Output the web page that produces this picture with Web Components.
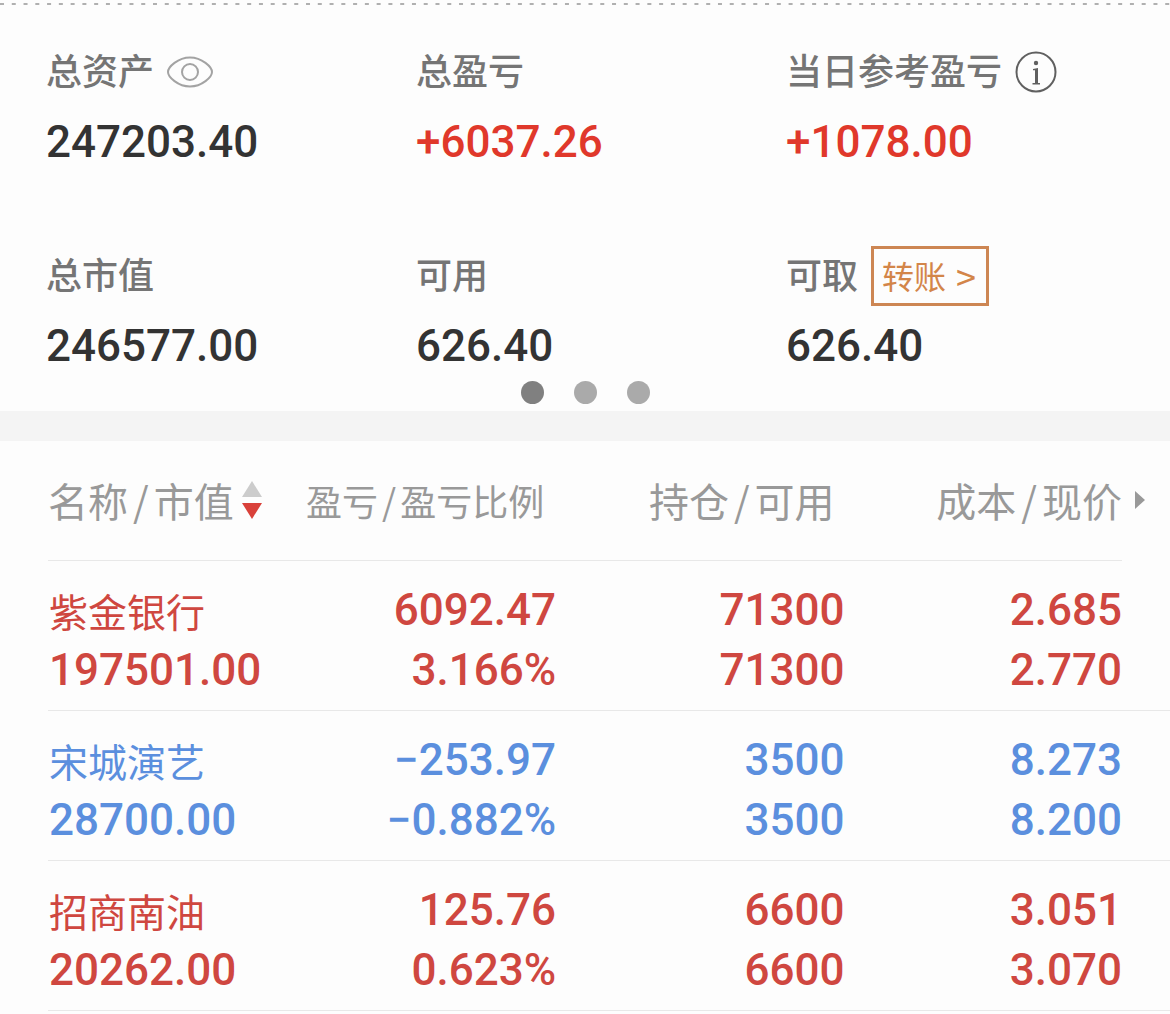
<!DOCTYPE html>
<html lang="zh-CN">
<head>
<meta charset="UTF-8">
<meta name="viewport" content="width=device-width, initial-scale=1">
<title>持仓</title>
<style>
    body {
        margin: 0;
        background: #fdfdfd;
        font-family: "Noto Sans CJK SC", sans-serif;
        --num-font: Roboto, "Noto Sans CJK SC", sans-serif;
        --rise: #e0382b;
    }
</style>
</head>
<body>
<account-summary>
    <asset-item label="总资产" value="247203.40">
        <icon-button slot="extra" icon="eye" label="隐藏金额"></icon-button>
    </asset-item>
    <asset-item label="总盈亏" value="+6037.26" trend="rise"></asset-item>
    <asset-item label="当日参考盈亏" value="+1078.00" trend="rise">
        <icon-button slot="extra" icon="info" label="说明"></icon-button>
    </asset-item>
    <asset-item label="总市值" value="246577.00"></asset-item>
    <asset-item label="可用" value="626.40"></asset-item>
    <asset-item label="可取" value="626.40">
        <transfer-link slot="extra">转账</transfer-link>
    </asset-item>
</account-summary>
<page-dots count="3" active="0"></page-dots>
<holdings-table></holdings-table>

<script>
const icons = {
    eye: `
        <svg width="46" height="32" viewBox="0 0 46 32" fill="none" stroke="#a3a3a3" stroke-width="2">
            <path d="M1 16C1 11 11 1.500 23 1.500s22 9.500 22 14.500-10 14.500-22 14.500S1 21 1 16z"/>
            <circle cx="23" cy="16" r="8"/>
        </svg>`,
    info: `
        <svg width="42" height="42" viewBox="0 0 42 42">
            <circle cx="21" cy="21" r="19.5" fill="none" stroke="#606060" stroke-width="2"/>
            <circle cx="21" cy="12" r="2.2" fill="#606060"/>
            <path d="M18 18l5-1v15h2v1.4h-7.500V32h2.500V19.200h-2z" fill="#606060"/>
        </svg>`
};

class AccountSummary extends HTMLElement {
    connectedCallback() {
        this.attachShadow({ mode: 'open' });
        this.shadowRoot.innerHTML = `
            <style>
                :host {
                    display: block;
                }
                .rule {
                    display: block;
                    width: 100%;
                    height: 5px;
                }
                .grid {
                    display: grid;
                    grid-template-columns: repeat(3, 1fr);
                    row-gap: 76px;
                    padding: 37px 14px 0 46px;
                }
            </style>
            <svg class="rule"><line x1="0" y1="4" x2="100%" y2="4" stroke="#b0b0b0" stroke-width="2" stroke-dasharray="4 7.770"/></svg>
            <div class="grid"><slot></slot></div>
        `;
    }
}
customElements.define('account-summary', AccountSummary);

class AssetItem extends HTMLElement {
    connectedCallback() {
        const label = this.getAttribute('label') || '';
        const value = this.getAttribute('value') || '';

        this.attachShadow({ mode: 'open' });
        this.shadowRoot.innerHTML = `
            <style>
                :host {
                    display: block;
                }
                .label {
                    display: flex;
                    height: 60px;
                    gap: 13px;
                    font-size: 36px;
                    line-height: 54px;
                    font-weight: 500;
                    color: #757575;
                    white-space: nowrap;
                }
                .value {
                    height: 68px;
                    font: 500 44px/80px var(--num-font);
                    color: #333;
                }
                :host([trend="rise"]) .value {
                    color: var(--rise);
                }
            </style>
            <div class="label"><span>${label}</span><slot name="extra"></slot></div>
            <div class="value">${value}</div>
        `;
    }
}
customElements.define('asset-item', AssetItem);

class IconButton extends HTMLElement {
    connectedCallback() {
        this.attachShadow({ mode: 'open' });
        this.shadowRoot.innerHTML = `
            <style>
                :host {
                    display: flex;
                    align-items: center;
                }
                button {
                    display: flex;
                    padding: 0;
                    border: 0;
                    background: none;
                    cursor: pointer;
                }
            </style>
            <button type="button" aria-label="${this.getAttribute('label')}">${icons[this.getAttribute('icon')]}</button>
        `;
    }
}
customElements.define('icon-button', IconButton);

class TransferLink extends HTMLElement {
    connectedCallback() {
        this.attachShadow({ mode: 'open' });
        this.shadowRoot.innerHTML = `
            <style>
                :host {
                    display: flex;
                }
                a {
                    display: flex;
                    gap: 10px;
                    padding: 0 10px 0 8px;
                    border: 3px solid #cd8653;
                    font-size: 32px;
                    font-weight: 400;
                    line-height: 52px;
                    color: #d38549;
                    text-decoration: none;
                }
                span {
                    font-size: 36px;
                }
            </style>
            <a href="#transfer"><slot></slot><span>&gt;</span></a>
        `;
    }
}
customElements.define('transfer-link', TransferLink);

class PageDots extends HTMLElement {
    connectedCallback() {
        const count = parseInt(this.getAttribute('count')) || 0;
        const active = parseInt(this.getAttribute('active')) || 0;
        let dots = '';
        for (let i = 0; i < count; i++) {
            dots += `<button type="button" aria-label="第${i + 1}页" class="${i === active ? 'active' : ''}"></button>`;
        }

        this.attachShadow({ mode: 'open' });
        this.shadowRoot.innerHTML = `
            <style>
                :host {
                    display: flex;
                    justify-content: center;
                    gap: 30px;
                    padding: 7px 0;
                    border-bottom: 30px solid #f4f4f4;
                }
                button {
                    width: 23px;
                    height: 23px;
                    padding: 0;
                    border: 0;
                    border-radius: 50%;
                    background: #aaa;
                }
                .active {
                    background: #808080;
                }
            </style>
            ${dots}
        `;
    }
}
customElements.define('page-dots', PageDots);

class HoldingsTable extends HTMLElement {
    constructor() {
        super();
        this.rows = [
            { name: '紫金银行', market: '197501.00', profit: '6092.47', ratio: '3.166%', held: '71300', free: '71300', cost: '2.685', price: '2.770' },
            { name: '宋城演艺', market: '28700.00', profit: '−253.97', ratio: '−0.882%', held: '3500', free: '3500', cost: '8.273', price: '8.200' },
            { name: '招商南油', market: '20262.00', profit: '125.76', ratio: '0.623%', held: '6600', free: '6600', cost: '3.051', price: '3.070' }
        ];
    }

    connectedCallback() {
        this.attachShadow({ mode: 'open' });
        this.render();
    }

    renderRow(row) {
        const trend = row.profit.startsWith('−') ? 'fall' : 'rise';
        return `
            <tr class="${trend}">
                <td><div class="name">${row.name}</div><div>${row.market}</div></td>
                <td><div>${row.profit}</div><div>${row.ratio}</div></td>
                <td><div>${row.held}</div><div>${row.free}</div></td>
                <td><div>${row.cost}</div><div>${row.price}</div></td>
            </tr>
        `;
    }

    render() {
        this.shadowRoot.innerHTML = `
            <style>
                :host {
                    display: block;
                    padding-left: 48px;
                }
                table {
                    width: 100%;
                    table-layout: fixed;
                    border-spacing: 0;
                }
                .c1, .c2 { width: 23%; }
                .c3 { width: 25%; }
                .c4 { width: 29%; }
                th {
                    height: 117px;
                    padding: 0 0 3px;
                    font-size: 40px;
                    font-weight: 400;
                    line-height: 60px;
                    color: #999;
                    text-align: right;
                    white-space: nowrap;
                }
                thead tr {
                    background: linear-gradient(#e8e8e8, #e8e8e8) no-repeat left bottom / calc(100% - 48px) 1px;
                }
                th:nth-child(1), th:nth-child(2) {
                    text-align: left;
                }
                th:nth-child(2) {
                    font-size: 36px;
                }
                th:nth-child(3) {
                    padding-right: 10px;
                }
                th:nth-child(4) {
                    padding-right: 24px;
                }
                th i {
                    margin: 0 5px;
                    font-style: normal;
                }
                th:nth-child(2) i {
                    margin: 0 4px;
                }
                button {
                    display: inline-flex;
                    align-items: center;
                    gap: 7px;
                    padding: 0;
                    border: 0;
                    background: none;
                    font: inherit;
                    color: inherit;
                    cursor: pointer;
                }
                .more {
                    gap: 13px;
                }
                svg {
                    flex: none;
                }
                td {
                    height: 120px;
                    padding: 19px 0 10px;
                    border-bottom: 1px solid #e8e8e8;
                    font: 500 44px/60px var(--num-font);
                    text-align: right;
                    white-space: nowrap;
                }
                td div {
                    height: 60px;
                }
                td:nth-child(1) {
                    padding-left: 1px;
                    text-align: left;
                }
                td:nth-child(2) {
                    padding-right: 8px;
                }
                td:nth-child(4) {
                    padding-right: 48px;
                }
                .name {
                    font-family: "Noto Sans CJK SC", sans-serif;
                    font-size: 39px;
                    font-weight: 400;
                }
                .rise { color: #cf4740; }
                .fall { color: #5b8fde; }
            </style>
            <table>
                <colgroup><col class="c1"><col class="c2"><col class="c3"><col class="c4"></colgroup>
                <thead>
                    <tr>
                        <th><button type="button"><span>名称<i>/</i>市值</span><svg width="22" height="40" viewBox="0 0 22 40"><path d="M11 1l10 16H1z" fill="#ccc"/><path d="M11 39L1 23h20z" fill="#d9413a"/></svg></button></th>
                        <th>盈亏<i>/</i>盈亏比例</th>
                        <th>持仓<i>/</i>可用</th>
                        <th><button type="button" class="more"><span>成本<i>/</i>现价</span><svg width="11" height="20" viewBox="0 0 11 20"><path d="M0 1l10 9-10 9z" fill="#999"/></svg></button></th>
                    </tr>
                </thead>
                <tbody>${this.rows.map(row => this.renderRow(row)).join('')}</tbody>
            </table>
        `;
    }
}
customElements.define('holdings-table', HoldingsTable);
</script>
</body>
</html>
